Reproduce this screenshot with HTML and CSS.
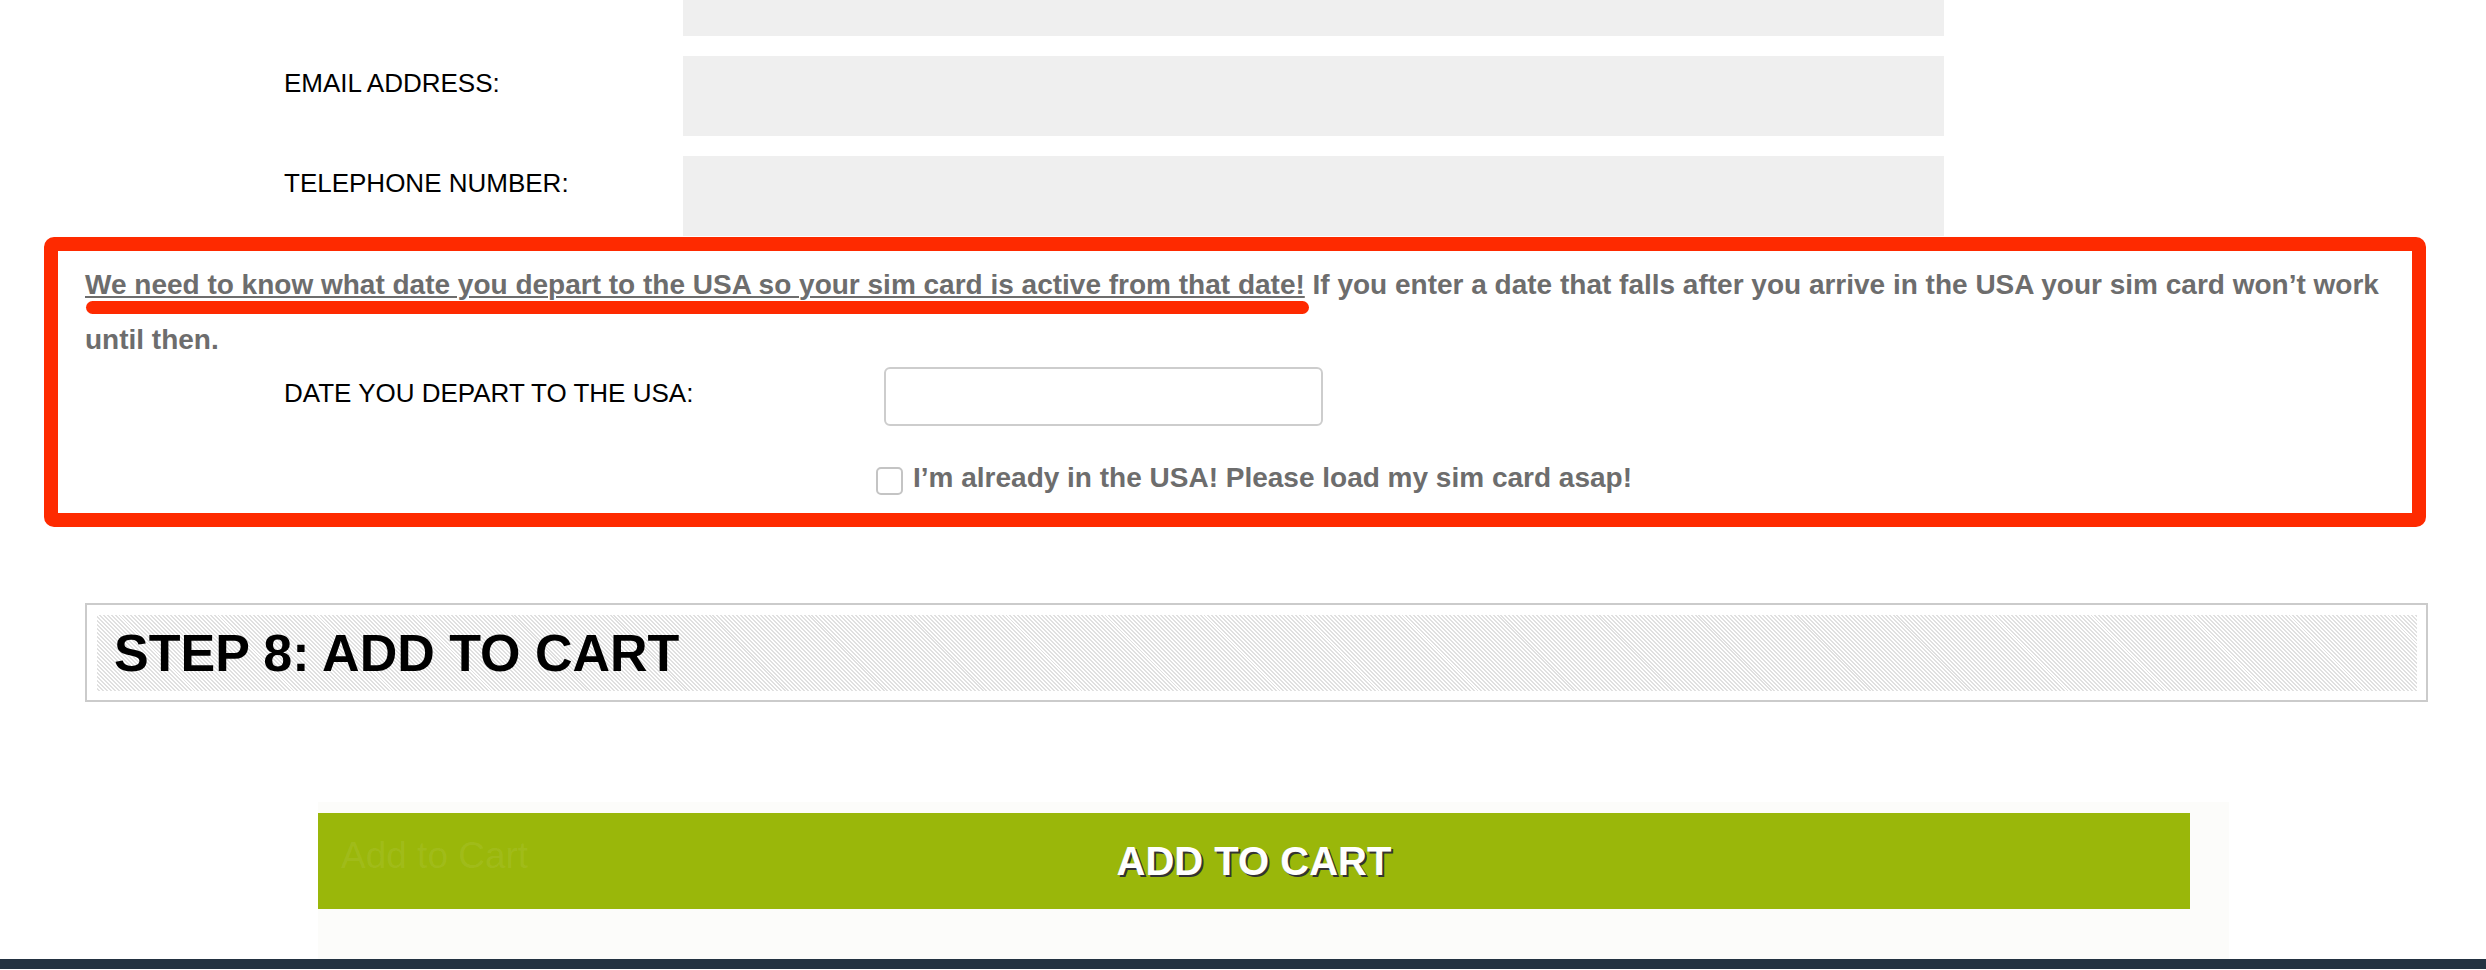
FILE: index.html
```html
<!DOCTYPE html>
<html lang="en">

<head>
    <meta charset="UTF-8">
    <title>Order SIM card</title>
    <link rel="stylesheet" href="styles.css">
</head>

<body>
    <div class="page">
        <div class="fields">
            <div class="field-row">
                <label for="fullname"></label>
                <input type="text" id="fullname" class="field-box" aria-label="Full name">
            </div>
            <div class="field-row">
                <label for="email">EMAIL ADDRESS:</label>
                <input type="text" id="email" class="field-box">
            </div>
            <div class="field-row">
                <label for="phone">TELEPHONE NUMBER:</label>
                <input type="text" id="phone" class="field-box">
            </div>
        </div>

        <div class="notice">
            <p class="notice-text"><span class="marked">We need to know what date you depart to the USA so your sim card is active from that date!</span> If you enter a date that falls after you arrive in the USA your sim card won’t work until then.</p>
            <div class="date-row">
                <label for="departDate">DATE YOU DEPART TO THE USA:</label>
                <input type="text" id="departDate" class="date-input">
            </div>
            <div class="check-row">
                <span class="check-box"></span>
                <span class="check-label">I’m already in the USA! Please load my sim card asap!</span>
            </div>
        </div>

        <div class="step">
            <h2 class="step-title">STEP 8: ADD TO CART</h2>
        </div>

        <div class="cart">
            <button type="button" class="cart-btn">
                <span class="cart-ghost">Add to Cart</span>
                ADD TO CART
            </button>
        </div>
    </div>
    <footer class="footer"></footer>
</body>

</html>
```

FILE: styles.css
```css
body {
    margin: 0;
    font-family: "Liberation Sans", Arial, sans-serif;
    background-color: #fff;
    overflow: hidden;
}

.fields {
    margin-top: -44px;
}

.field-row {
    display: flex;
    padding-left: 284px;
    margin-bottom: 20px;
}

.field-row:last-child {
    margin-bottom: 0;
}

.field-row label {
    width: 399px;
    padding-top: 12px;
    font-size: 26px;
    line-height: 30px;
    color: #000;
}

.field-box {
    width: 1261px;
    height: 80px;
    box-sizing: border-box;
    border: none;
    background-color: #efefef;
    margin: 0;
}

.notice {
    margin: 1px 0 0 44px;
    width: 2382px;
    box-sizing: border-box;
    border: 14px solid #fe2a00;
    border-radius: 10px;
    padding: 6px 27px 8px 27px;
}

.notice-text {
    margin: 0;
    font-size: 28px;
    font-weight: bold;
    line-height: 55px;
    color: #6d6d6d;
}

.marked {
    position: relative;
    text-decoration: underline;
    text-decoration-thickness: 2px;
    text-underline-offset: 2px;
}

/* red marker stroke drawn under the first sentence */
.marked::after {
    content: "";
    position: absolute;
    left: 1px;
    right: -4px;
    top: calc(100% + 1px);
    height: 13px;
    border-radius: 7px;
    background-color: #fe2a00;
}

.date-row {
    display: flex;
    align-items: flex-start;
    padding-left: 199px;
}

.date-row label {
    width: 600px;
    padding-top: 11px;
    font-size: 26px;
    line-height: 30px;
    color: #000;
}

.date-input {
    width: 439px;
    height: 59px;
    box-sizing: border-box;
    margin: 0;
    border: 2px solid #cdcdcd;
    border-radius: 6px;
    background-color: #fff;
}

.check-row {
    display: flex;
    align-items: center;
    margin-top: 24px;
    padding-left: 791px;
    height: 55px;
}

.check-box {
    width: 27px;
    height: 28px;
    box-sizing: border-box;
    border: 2px solid #c4c4c4;
    border-radius: 5px;
    margin-right: 10px;
    margin-top: 6px;
}

.check-label {
    font-size: 28px;
    font-weight: bold;
    color: #6d6d6d;
}

.step {
    margin: 76px 0 0 85px;
    width: 2343px;
    box-sizing: border-box;
    border: 2px solid #cbcbcb;
    padding: 10px 9px 9px 10px;
}

.step-title {
    margin: 0;
    padding-left: 17px;
    font-size: 52px;
    line-height: 76px;
    font-weight: bold;
    color: #000;
    background-color: #fff;
    background-image: repeating-linear-gradient(45deg, #fff 0 1.4px, #e0e0e0 1.4px 2.8px);
}

.cart {
    margin: 100px 0 0 318px;
    width: 1911px;
    box-sizing: border-box;
    padding: 11px 39px 50px 0;
    background-color: #fcfcfa;
}

.cart-btn {
    position: relative;
    display: block;
    width: 100%;
    height: 96px;
    border: none;
    margin: 0;
    padding: 0;
    background-color: #9ab70a;
    color: #fff;
    font-family: "Liberation Sans", Arial, sans-serif;
    font-size: 40px;
    font-weight: bold;
    text-shadow: 2px 2px 0 #333;
    cursor: pointer;
}

.cart-ghost {
    position: absolute;
    left: 23px;
    top: 22px;
    font-size: 37px;
    font-weight: normal;
    color: rgba(255, 255, 255, 0.07);
    text-shadow: none;
}

.footer {
    height: 10px;
    background-color: #233241;
}
```
